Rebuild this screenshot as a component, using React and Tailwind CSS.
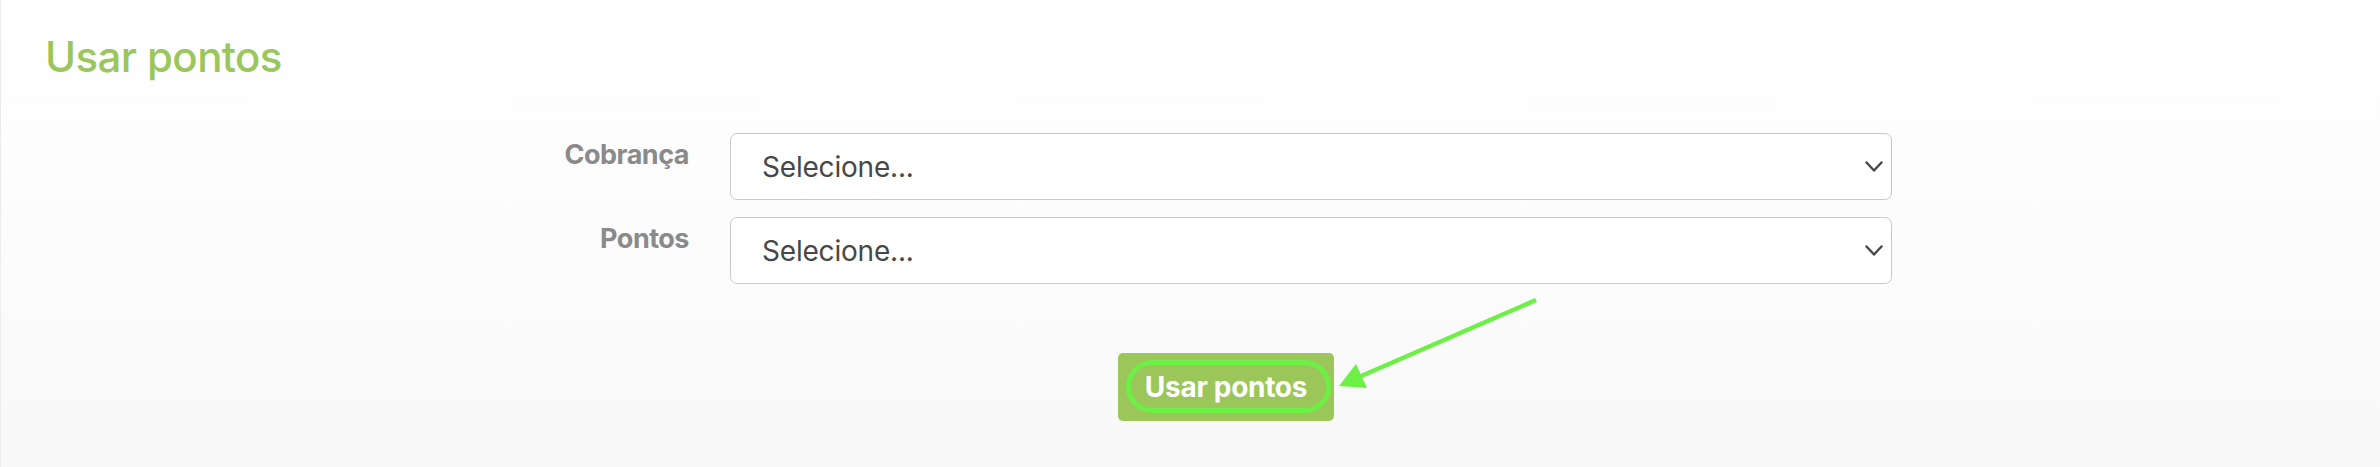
export default function App() {
  const font = { fontFamily: "Inter, 'Noto Sans', sans-serif" };
  return (
    <div
      className="relative w-[2380px] h-[467px] overflow-hidden border-l border-[#ececec] bg-gradient-to-b from-[#ffffff] via-[#fcfcfc] to-[#f8f8f8]"
      style={font}
    >
      <div className="pl-[44px] pt-[36px] h-[96px]">
        <h1 className="text-[42px] leading-[42px] font-medium tracking-[-0.6px] text-[#9bc65a]">
          Usar pontos
        </h1>
      </div>

      <div className="ml-[500px] mt-[37px] grid grid-cols-[188px_1162px] gap-x-[41px] gap-y-[17px]">
        <div className="pt-[8px] text-right text-[27px] leading-[27px] font-bold tracking-[-0.5px] text-[#8a8a8a]">
          Cobrança
        </div>
        <div className="h-[67px] flex items-center justify-between rounded-[7px] border-[1.5px] border-[#c9c9c9] bg-white pl-[31px] pr-[8px]">
          <span className="text-[28px] tracking-[-0.2px] text-[#474747]">Selecione...</span>
          <svg width="18" height="12" viewBox="0 0 18 12" className="mt-[1px]">
            <path d="M1.5 1.5 L9 9.5 L16.5 1.5" fill="none" stroke="#474747" strokeWidth="2.4" strokeLinecap="round" strokeLinejoin="round" />
          </svg>
        </div>

        <div className="pt-[8px] text-right text-[27px] leading-[27px] font-bold tracking-[-0.5px] text-[#8a8a8a]">
          Pontos
        </div>
        <div className="h-[67px] flex items-center justify-between rounded-[7px] border-[1.5px] border-[#c9c9c9] bg-white pl-[31px] pr-[8px]">
          <span className="text-[28px] tracking-[-0.2px] text-[#474747]">Selecione...</span>
          <svg width="18" height="12" viewBox="0 0 18 12" className="mt-[1px]">
            <path d="M1.5 1.5 L9 9.5 L16.5 1.5" fill="none" stroke="#474747" strokeWidth="2.4" strokeLinecap="round" strokeLinejoin="round" />
          </svg>
        </div>
      </div>

      <div className="ml-[1117px] mt-[69px]">
        <button className="relative w-[216px] h-[68px] rounded-[5px] bg-[#9bc65a] flex items-center justify-center text-[28px] font-bold tracking-[-0.3px] text-white">
          <span className="relative z-10">Usar pontos</span>
          <span className="absolute left-[8px] top-[7px] w-[205px] h-[53px] rounded-full border-[5px] border-[#6cf046]"></span>
        </button>
      </div>

      <svg
        className="absolute left-0 top-0 pointer-events-none"
        width="2380"
        height="467"
        viewBox="0 0 2380 467"
      >
        <line x1="1535" y1="300" x2="1358" y2="377" stroke="#6cf046" strokeWidth="4.5" />
        <polygon points="1338,386 1355,364 1366,388" fill="#6cf046" />
      </svg>
    </div>
  );
}
